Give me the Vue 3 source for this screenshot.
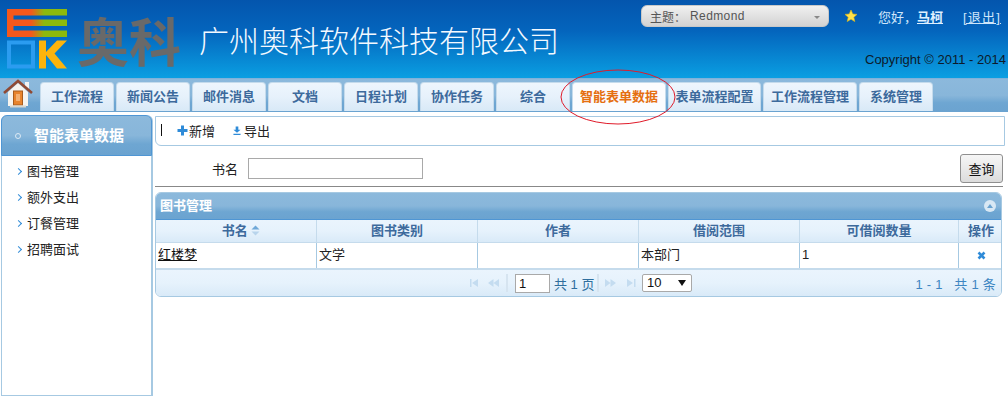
<script setup>
const tabs = [
  { label: '工作流程', w: 74 }, { label: '新闻公告', w: 74 }, { label: '邮件消息', w: 74 },
  { label: '文档', w: 74 }, { label: '日程计划', w: 74 }, { label: '协作任务', w: 74 },
  { label: '综合', w: 74 }, { label: '智能表单数据', w: 94, active: true },
  { label: '表单流程配置', w: 93 }, { label: '工作流程管理', w: 94 }, { label: '系统管理', w: 74 }
]
const menu = ['图书管理', '额外支出', '订餐管理', '招聘面试']
const cols = [
  { label: '书名', w: 161, sort: true }, { label: '图书类别', w: 161 }, { label: '作者', w: 161 },
  { label: '借阅范围', w: 161 }, { label: '可借阅数量', w: 159 }, { label: '操作', w: 44 }
]
const cells = ['文学', '', '本部门', '1']
</script>

<template>
  <div class="page">
    <header class="top">
      <svg class="logo" width="62" height="62" viewBox="0 0 62 62">
        <defs>
          <linearGradient id="eg" x1="0" x2="1" y1="0" y2="0">
            <stop offset="0.4" stop-color="#f4581c" />
            <stop offset="0.62" stop-color="#8cba0c" />
          </linearGradient>
        </defs>
        <rect x="0" y="0" width="60" height="6.5" fill="url(#eg)" />
        <rect x="0" y="10.5" width="60" height="6.5" fill="url(#eg)" />
        <rect x="0" y="21.5" width="60" height="6.5" fill="url(#eg)" />
        <rect x="0" y="0" width="6.5" height="28" fill="#f4581c" />
        <rect x="2" y="33.5" width="24" height="24" fill="none" stroke="#2b9cf0" stroke-width="4" />
        <rect x="32" y="31.5" width="7" height="28" fill="#fcb40c" />
        <path d="M39 43 L50 31.5 H60 L47.5 44.5 L60 59.5 H50 L39 46 Z" fill="#fcb40c" />
      </svg>
      <div class="brand">奥科</div>
      <div class="title">广州奥科软件科技有限公司</div>
      <div class="right">
        <div class="user-row">
          <div class="theme">
            <span class="theme-label">主题：</span>
            <span class="theme-value">Redmond</span>
            <span class="caret"></span>
          </div>
          <svg class="star" width="14" height="14" viewBox="0 0 14 14">
            <path d="M7 1 L8.8 5 L13 5.4 L9.8 8.2 L10.8 12.6 L7 10.2 L3.2 12.6 L4.2 8.2 L1 5.4 L5.2 5 Z" fill="#ffe14a" stroke="#e8b90c" stroke-width="0.6" />
          </svg>
          <span class="hello">您好，<a class="name">马柯</a></span>
          <a class="logout">[退出]</a>
        </div>
        <div class="copy">Copyright © 2011 - 2014</div>
      </div>
    </header>

    <nav class="nav">
      <svg class="home" width="32" height="30" viewBox="0 0 32 30">
        <path d="M6 13 V27 H26 V13 L16 4 Z" fill="#f6f4ee" />
        <rect x="23" y="3" width="4" height="7" fill="#f2f2f2" />
        <path d="M2 14 L16 2 L30 14" fill="none" stroke="#8f4a34" stroke-width="2.6" />
        <rect x="11.5" y="12" width="9" height="14" fill="#e8842c" stroke="#a85c1c" stroke-width="1" />
        <rect x="14" y="15" width="4" height="7" fill="#f4b070" />
        <rect x="8" y="26.5" width="16" height="2" fill="#d8d8d0" />
      </svg>
      <a v-for="t in tabs" :key="t.label" class="tab" :class="{ active: t.active }" :style="{ width: t.w + 'px' }">{{ t.label }}</a>
      <svg class="ellipse" width="118" height="58" viewBox="0 0 118 58">
        <ellipse cx="59" cy="29" rx="57" ry="27" fill="none" stroke="#e01b2a" stroke-width="1" />
      </svg>
    </nav>

    <div class="body">
      <aside class="side">
        <div class="side-head"><span class="ring"></span>智能表单数据</div>
        <ul class="menu">
          <li v-for="m in menu" :key="m"><span class="chev"></span>{{ m }}</li>
        </ul>
      </aside>

      <main class="main">
        <div class="toolbar">
          <span class="bar"></span>
          <span class="tool first">
            <svg width="11" height="11" viewBox="0 0 11 11"><path d="M4 0.5 H7 V4 H10.5 V7 H7 V10.5 H4 V7 H0.5 V4 H4 Z" fill="#2f8bd8" /></svg>
            新增
          </span>
          <span class="tool second">
            <svg width="8" height="10" viewBox="0 0 9 10"><path d="M3 0 H6 V3.5 H8.5 L4.5 7 L0.5 3.5 H3 Z M0.5 8 H8.5 V9.5 H0.5 Z" fill="#2f8bd8" /></svg>
            导出
          </span>
        </div>

        <div class="search">
          <label class="search-label">书名</label>
          <span class="search-input"></span>
          <button class="btn" type="button">查询</button>
        </div>
        <div class="rule"></div>

        <section class="panel">
          <div class="panel-head">
            <span class="panel-title">图书管理</span>
            <span class="collapse"><i></i></span>
          </div>
          <div class="row thead">
            <div v-for="c in cols" :key="c.label" class="th" :class="{ sorted: c.sort }" :style="{ width: c.w + 'px' }">
              {{ c.label }}
              <svg v-if="c.sort" class="sort" width="9" height="11" viewBox="0 0 9 11"><path d="M4.5 0.5 L8.5 4.5 H0.5 Z" fill="#6fa8d8" /><path d="M0.5 6.5 H8.5 L4.5 10.5 Z" fill="#b8d4ec" /></svg>
            </div>
          </div>
          <div class="row tbody">
            <div class="td" :style="{ width: '161px' }"><a class="link">红楼梦</a></div>
            <div v-for="(c, i) in cells" :key="i" class="td" :style="{ width: cols[i + 1].w + 'px' }">{{ c }}</div>
            <div class="td op" :style="{ width: '44px' }">
              <svg width="9" height="9" viewBox="0 0 9 9"><path d="M1.5 1.5 L7.5 7.5 M7.5 1.5 L1.5 7.5" stroke="#2f8bd8" stroke-width="2.6" /></svg>
            </div>
          </div>
          <div class="pager">
            <svg class="nav-ico i1" width="11" height="8" viewBox="0 0 11 8"><path d="M1 0 V8 H2.5 V0 Z M3 4 L9 0 V8 Z" fill="#c4dcf0" /></svg>
            <svg class="nav-ico i2" width="11" height="8" viewBox="0 0 11 8"><path d="M0 4 L5.5 0 V8 Z M5.5 4 L11 0 V8 Z" fill="#c4dcf0" /></svg>
            <span class="sep s1"></span>
            <span class="page-input">1</span>
            <span class="page-total">共 1 页</span>
            <span class="sep s2"></span>
            <svg class="nav-ico i3" width="11" height="8" viewBox="0 0 11 8"><path d="M0 0 L5.5 4 L0 8 Z M5.5 0 L11 4 L5.5 8 Z" fill="#c4dcf0" /></svg>
            <svg class="nav-ico i4" width="11" height="8" viewBox="0 0 11 8"><path d="M1 0 L7 4 L1 8 Z M8 0 H9.5 V8 H8 Z" fill="#c4dcf0" /></svg>
            <span class="page-size">10<span class="arrow"></span></span>
            <span class="page-info">1 - 1 &nbsp; 共 1 条</span>
          </div>
        </section>
      </main>
    </div>
  </div>
</template>

<style>
html, body { margin: 0; background: #fff; overflow: hidden; }
</style>

<style scoped>
.page {
  width: 1008px;
  height: 401px;
  overflow: hidden;
  font-family: "Liberation Sans", "Noto Sans CJK SC", sans-serif;
  font-size: 13px;
  color: #222;
  background: #fff;
}
.top {
  height: 78px;
  display: flex;
  background: linear-gradient(#0455ad 0, #0465bd 40%, #0a9fe2 100%);
}
.logo { margin: 9px 0 0 7px; flex: none; }
.brand {
  margin: 11px 0 0 8px;
  width: 105px;
  font-size: 52px;
  line-height: 66px;
  font-weight: 700;
  color: #696969;
  white-space: nowrap;
}
.title {
  margin: 18px 0 0 17px;
  font-size: 30px;
  line-height: 48px;
  color: #f4f9ff;
  font-weight: 300;
  white-space: nowrap;
}
.right { margin-left: 82px; width: 364px; flex: none; }
.user-row { display: flex; align-items: center; height: 22px; margin-top: 5px; white-space: nowrap; }
.theme {
  width: 188px;
  height: 22px;
  box-sizing: border-box;
  border: 1px solid #c8c8c8;
  border-radius: 6px;
  background: linear-gradient(#f0f0f0, #d2d2d2);
  display: flex;
  align-items: center;
  color: #555;
  font-size: 12px;
  padding-left: 8px;
  position: relative;
}
.theme-label { width: 40px; }
.theme-value { letter-spacing: 0.4px; }
.caret {
  margin-left: auto;
  margin-right: 8px;
  margin-top: 3px;
  border-left: 3px solid transparent;
  border-right: 3px solid transparent;
  border-top: 3px solid #888;
}
.star { margin-left: 15px; flex: none; }
.hello { margin-left: 20px; color: #cfe6fa; font-size: 13px; width: 85px; }
.name { color: #dff0ff; text-decoration: underline; font-weight: 700; }
.logout { color: #cfe6fa; font-size: 13px; letter-spacing: 1.2px; text-decoration: underline; }
.copy {
  margin-top: 25px;
  margin-left: 224px;
  color: #0d1a2a;
  font-size: 13px;
  line-height: 16px;
  white-space: nowrap;
}
.nav {
  height: 34px;
  box-sizing: border-box;
  position: relative;
  display: flex;
  gap: 2px;
  padding: 3px 0 0 40px;
  border-top: 1px solid #7fb2da;
  background: linear-gradient(#8cb9dc 0, #88b6da 50%, #6ea6d2 72%, #6ba3d0 100%);
}
.home { position: absolute; left: 2px; top: 0; }
.tab {
  flex: none;
  height: 29px;
  box-sizing: border-box;
  border: 1px solid #c5dbec;
  border-bottom: none;
  border-radius: 4px 4px 0 0;
  background: linear-gradient(#eef6fd 0, #e6f1fb 50%, #d8e9f7 100%);
  color: #3d6a9c;
  font-weight: 700;
  font-size: 13px;
  line-height: 28px;
  text-align: center;
  white-space: nowrap;
}
.tab.active {
  background: #fbfcfe;
  color: #e56f10;
}
.ellipse { position: absolute; left: 559px; top: -11px; pointer-events: none; }
.body {
  display: flex;
  padding: 2px 0 0 1px;
  height: 287px;
  box-sizing: border-box;
}
.side {
  width: 152px;
  flex: none;
  box-sizing: border-box;
  height: 281px;
  margin-top: 1px;
  border: 1px solid #a6c9e2;
  border-top: none;
  border-right-width: 2px;
  border-radius: 6px 6px 0 0;
  background: #fff;
}
.side-head {
  height: 41px;
  box-sizing: border-box;
  border: 1px solid #4f96d4;
  border-radius: 6px 6px 0 0;
  margin: 0 -1px;
  background: linear-gradient(#8cb9dc 0, #88b6da 50%, #6ea6d2 72%, #6ba3d0 100%);
  color: #fff;
  font-weight: 700;
  font-size: 15px;
  line-height: 40px;
  display: flex;
  align-items: center;
  padding-left: 13px;
}
.ring {
  width: 4px;
  height: 4px;
  border: 1px solid #dce9f4;
  border-radius: 50%;
  margin-right: 13px;
}
.menu { list-style: none; margin: 3px 0 0; padding: 0; }
.menu li {
  height: 26px;
  line-height: 26px;
  padding-left: 25px;
  position: relative;
  white-space: nowrap;
}
.chev {
  position: absolute;
  left: 14px;
  top: 10px;
  width: 4px;
  height: 4px;
  border-top: 1.5px solid #2f8bd8;
  border-right: 1.5px solid #2f8bd8;
  transform: rotate(45deg);
}
.main { margin-left: 2px; width: 850px; flex: none; }
.toolbar {
  height: 30px;
  margin-top: 2px;
  width: 850px;
  box-sizing: border-box;
  border: 1px solid #a6c9e2;
  border-radius: 0 0 0 6px;
  display: flex;
  align-items: center;
  background: #fff;
}
.bar { width: 1px; height: 12px; background: #111; margin: -3px 0 0 5px; }
.tool { display: flex; align-items: center; gap: 1px; white-space: nowrap; margin-top: -1px; }
.tool.first { margin-left: 15px; }
.tool.second { margin-left: 18px; gap: 3px; }
.search {
  height: 40px;
  padding-top: 5px;
  display: flex;
  align-items: center;
  padding-left: 57px;
  width: 848px;
  box-sizing: border-box;
}
.search-label { width: 36px; white-space: nowrap; }
.search-input {
  width: 175px;
  height: 21px;
  box-sizing: border-box;
  border: 1px solid #a9a9a9;
  background: #fff;
}
.btn {
  margin-left: auto;
  width: 43px;
  height: 29px;
  box-sizing: border-box;
  border: 1px solid #8f8f8f;
  border-radius: 3px;
  background: linear-gradient(#f6f6f6, #dcdcdc);
  font: 13px "Liberation Sans", "Noto Sans CJK SC", sans-serif;
  color: #111;
  padding: 0;
}
.rule { height: 1px; width: 848px; background: #888; }
.panel {
  margin-top: 5px;
  width: 847px;
  box-sizing: border-box;
  border: 1px solid #a6c9e2;
  border-radius: 6px;
  overflow: hidden;
}
.panel-head {
  height: 27px;
  box-sizing: border-box;
  border-bottom: 1px solid #4f96d4;
  background: linear-gradient(#8cb9dc 0, #88b6da 50%, #6ea6d2 72%, #6ba3d0 100%);
  color: #fff;
  font-weight: 700;
  font-size: 13px;
  line-height: 25px;
  padding: 0 5px 0 4px;
  display: flex;
  justify-content: space-between;
  align-items: center;
}
.panel-title { margin-top: -2px; }
.collapse {
  width: 12px;
  height: 12px;
  border-radius: 50%;
  background: #d9e8f4;
  display: flex;
  align-items: center;
  justify-content: center;
}
.collapse i {
  border-left: 3.5px solid transparent;
  border-right: 3.5px solid transparent;
  border-bottom: 4px solid #6ba3d0;
}
.row { display: flex; }
.thead {
  height: 22px;
  border-bottom: 1px solid #c5dbec;
  background: linear-gradient(#eaf4fd 0, #e6f2fc 50%, #d9eaf8 100%);
}
.th {
  flex: none;
  box-sizing: border-box;
  border-right: 1px solid #c5dbec;
  text-align: center;
  color: #3d6a9c;
  font-weight: 700;
  line-height: 22px;
  white-space: nowrap;
}
.th.sorted { padding-left: 10px; }
.sort { vertical-align: -1px; }
.tbody { height: 25px; border-bottom: 2px solid #c5dbec; }
.td {
  flex: none;
  box-sizing: border-box;
  border-right: 1px solid #a6c9e2;
  padding-left: 2px;
  line-height: 24px;
  white-space: nowrap;
}
.th:last-child, .td:last-child { border-right: none; }
.link { text-decoration: underline; color: #111; }
.op { display: flex; align-items: center; justify-content: center; padding: 0; }
.pager {
  height: 26px;
  display: flex;
  align-items: center;
  background: linear-gradient(#eaf4fd 0, #e6f2fc 50%, #d9eaf8 100%);
  color: #2e6e9e;
  font-size: 13px;
  white-space: nowrap;
}
.nav-ico { flex: none; }
.i1 { margin-left: 313px; }
.i2 { margin-left: 8px; }
.sep { width: 2px; height: 18px; background: #d6e4f0; flex: none; }
.s1 { margin-left: 7px; }
.s2 { margin-left: 4px; }
.i3 { margin-left: 6px; }
.i4 { margin-left: 10px; }
.page-input {
  margin-left: 7px;
  width: 35px;
  height: 19px;
  box-sizing: border-box;
  border: 1px solid #a9a9a9;
  background: #fff;
  color: #111;
  line-height: 17px;
  padding-left: 3px;
}
.page-total { margin-left: 4px; width: 39px; }
.page-size {
  margin-left: 5px;
  width: 50px;
  height: 18px;
  box-sizing: border-box;
  border: 1px solid #a9a9a9;
  border-radius: 2px;
  background: #fff;
  color: #111;
  line-height: 16px;
  padding-left: 4px;
  position: relative;
}
.arrow {
  position: absolute;
  right: 5px;
  top: 5px;
  border-left: 4px solid transparent;
  border-right: 4px solid transparent;
  border-top: 6px solid #111;
}
.page-info { margin-left: auto; margin-right: 5px; color: #3d86c2; letter-spacing: 0.25px; }
</style>
